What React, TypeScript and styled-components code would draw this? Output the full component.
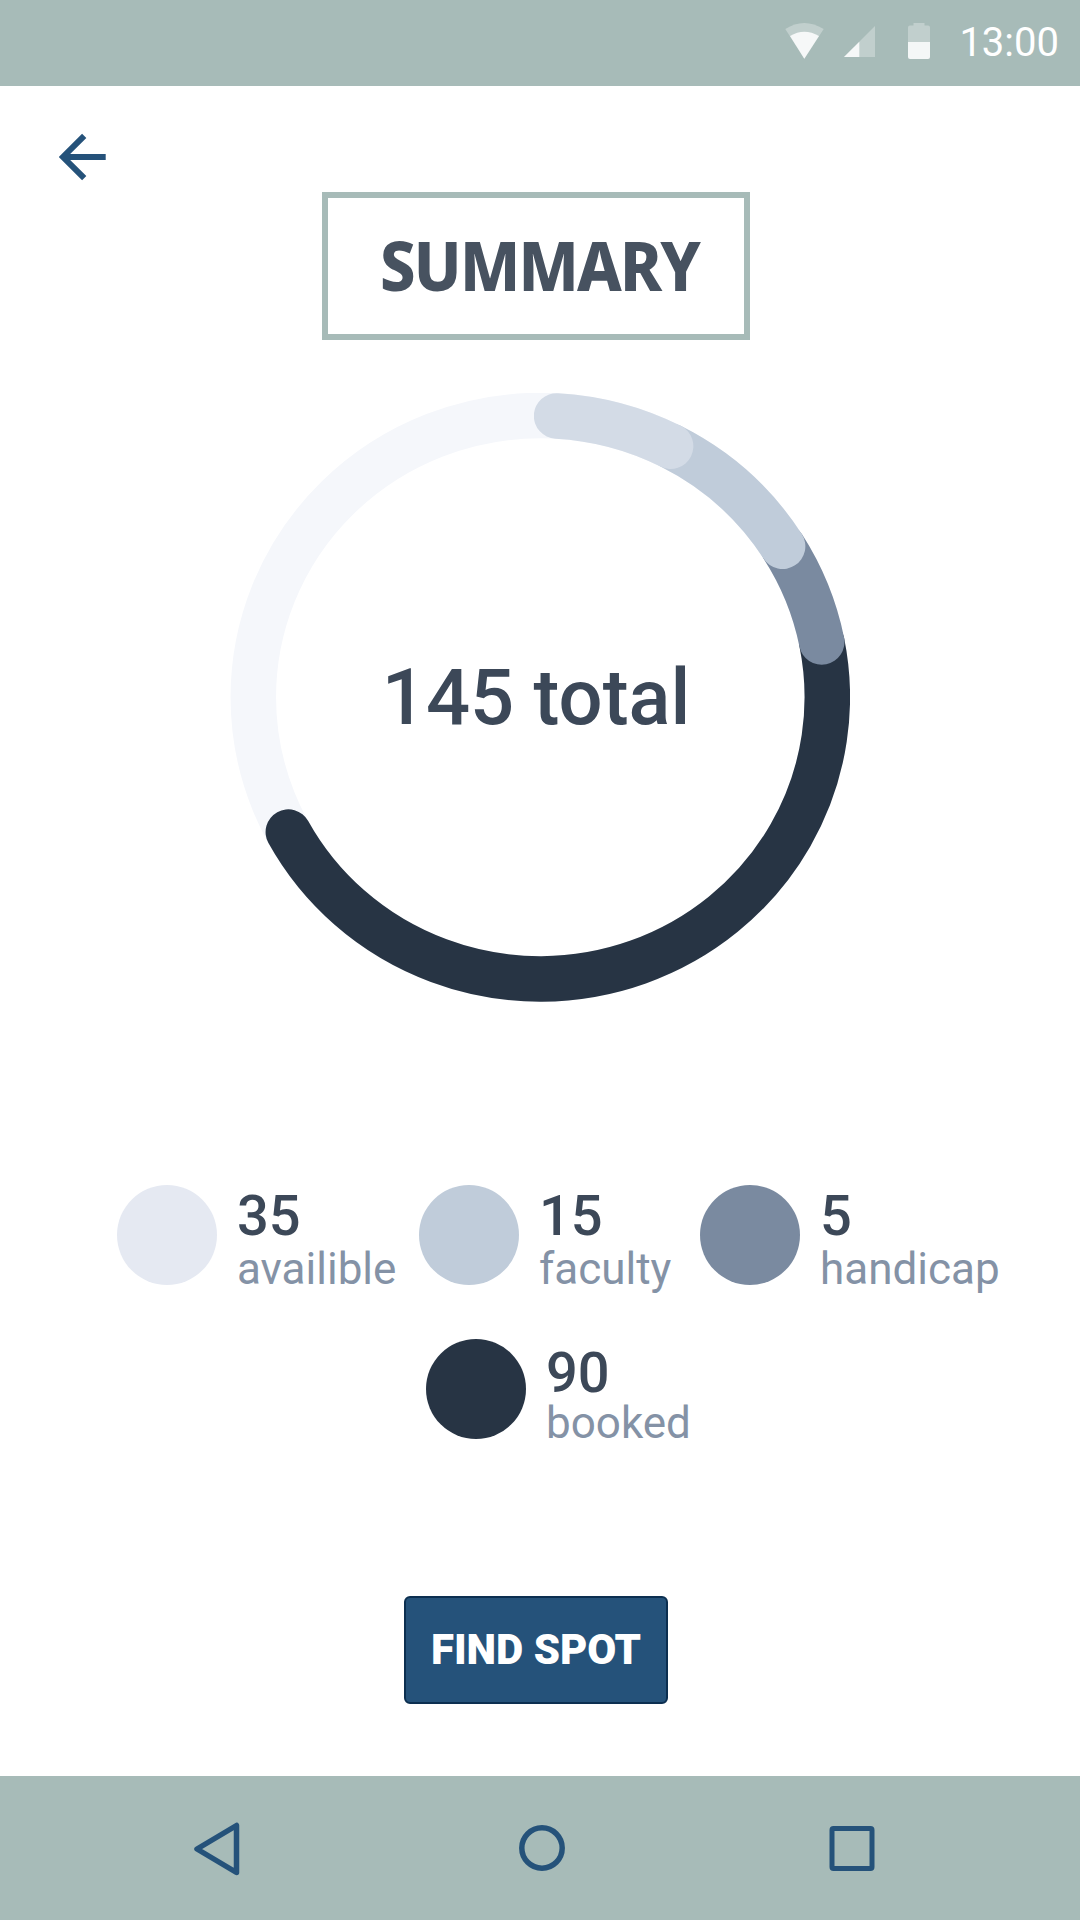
import React from 'react';
import styled, { createGlobalStyle } from 'styled-components';

const colors = {
  bar: '#a7bbb8',
  accent: '#25527a',
  ink: '#3c4858',
  label: '#8492a6',
};

const GlobalStyle = createGlobalStyle`
  * { box-sizing: border-box; }
  body { margin: 0; background: #fff; }
`;

const Screen = styled.div`
  width: 1080px;
  height: 1920px;
  display: flex;
  flex-direction: column;
  background: #fff;
  font-family: Roboto, "Liberation Sans", sans-serif;
  overflow: hidden;
`;

const StatusBar = styled.header`
  flex: none;
  height: 86px;
  display: flex;
  align-items: flex-start;
  justify-content: flex-end;
  padding: 18px 21px 0 0;
  background: ${colors.bar};
`;

const StatusIcons = styled.svg`
  width: 160px;
  height: 46px;
  margin-right: 19px;
`;

const Clock = styled.time`
  padding-top: 1px;
  font-size: 40px;
  line-height: 48px;
  color: #fff;
`;

const Main = styled.main`
  flex: 1;
  display: flex;
  flex-direction: column;
  align-items: flex-start;
`;

const BackButton = styled.button`
  flex: none;
  width: 60px;
  height: 60px;
  margin: 41px 0 0 52px;
  padding: 0;
  border: 0;
  background: none;
  svg { display: block; }
`;

const TitleBox = styled.div`
  flex: none;
  width: 428px;
  height: 148px;
  margin: 5px 0 0 322px;
  border: 6px solid ${colors.bar};
  display: flex;
  align-items: center;
  justify-content: center;
  padding: 0 0 3px 8px;
`;

const Title = styled.h1`
  margin: 0;
  font-family: "Noto Sans", "Open Sans", sans-serif;
  font-size: 68px;
  font-weight: 800;
  line-height: 90px;
  letter-spacing: -1.9px;
  color: #475260;
  white-space: nowrap;
  transform: scaleX(0.93);
`;

const ChartArea = styled.section`
  flex: none;
  width: 620px;
  height: 610px;
  margin: 53px 0 0 230px;
  display: grid;
  place-items: center;
  > * { grid-area: 1 / 1; }
`;

const Total = styled.p`
  margin: 0 0 0 -8px;
  font-size: 77.7px;
  font-weight: 500;
  line-height: 90px;
  color: ${colors.ink};
  white-space: nowrap;
`;

const Legend = styled.section`
  margin-top: 182px;
  display: flex;
  flex-direction: column;
  gap: 54px;
`;

const LegendRow = styled.div<{ $indent: number }>`
  display: flex;
  height: 100px;
  padding-left: ${(p) => p.$indent}px;
`;

const LegendItem = styled.div<{ $width: number }>`
  flex: none;
  width: ${(p) => p.$width}px;
  display: flex;
  gap: 20px;
`;

const Dot = styled.span<{ $color: string }>`
  flex: none;
  width: 100px;
  height: 100px;
  border-radius: 50%;
  background: ${(p) => p.$color};
`;

const LegendText = styled.div<{ $top: number }>`
  padding-top: ${(p) => p.$top}px;
  white-space: nowrap;
`;

const Value = styled.div<{ $height: number }>`
  height: ${(p) => p.$height}px;
  font-size: 56px;
  font-weight: 500;
  line-height: 52px;
  color: ${colors.ink};
`;

const Label = styled.div`
  font-size: 44px;
  line-height: 54px;
  color: ${colors.label};
`;

const FindButton = styled.button`
  flex: none;
  width: 264px;
  height: 108px;
  margin: 157px 0 0 404px;
  padding: 0;
  border: 2px solid #0c2f50;
  border-radius: 6px;
  background: ${colors.accent};
  color: #fff;
  font-family: inherit;
  font-size: 42px;
  font-weight: 900;
  line-height: 50px;
  white-space: nowrap;
`;

const NavBar = styled.nav`
  flex: none;
  height: 144px;
  display: flex;
  align-items: center;
  padding-left: 187px;
  gap: 258px;
  background: ${colors.bar};
  svg { display: block; flex: none; }
`;

const CX = 310.3;
const CY = 304.2;
const RX = 287;
const RY = 281.7;

/* Drawn back to front: every arc's rounded end covers the start of the one before it. */
const arcs = [
  { from: -11.3, to: 151.4, color: '#273444' },
  { from: -32.3, to: -11.3, color: '#7a8aa0' },
  { from: -63, to: -32.4, color: '#c0ccda' },
  { from: -86.75, to: -63, color: '#d3dbe6' },
];

function pointAt(degrees: number) {
  const t = (degrees * Math.PI) / 180;
  return `${(CX + RX * Math.cos(t)).toFixed(2)} ${(CY + RY * Math.sin(t)).toFixed(2)}`;
}

function Ring() {
  return (
    <svg width="620" height="610" fill="none">
      <clipPath id="startEdge">
        <path d="M304 0H620V610H0V200H304Z" />
      </clipPath>
      <ellipse cx={CX} cy={CY} rx={RX} ry={RY} stroke="#f5f7fb" strokeWidth="45.5" />
      <g clipPath="url(#startEdge)" strokeLinecap="round" strokeWidth="45.5">
        {arcs.map((a) => (
          <path key={a.color} stroke={a.color} d={`M${pointAt(a.from)}A${RX} ${RY} 0 0 1 ${pointAt(a.to)}`} />
        ))}
      </g>
    </svg>
  );
}

type Entry = { value: number; label: string; color: string; width: number };

const firstRow: Entry[] = [
  { value: 35, label: 'availible', color: '#e5e9f2', width: 302 },
  { value: 15, label: 'faculty', color: '#c0ccda', width: 281 },
  { value: 5, label: 'handicap', color: '#7a8aa0', width: 310 },
];
const secondRow: Entry[] = [{ value: 90, label: 'booked', color: '#273444', width: 280 }];

function Entries({ items, top, height }: { items: Entry[]; top: number; height: number }) {
  return (
    <>
      {items.map((e) => (
        <LegendItem key={e.label} $width={e.width}>
          <Dot $color={e.color} />
          <LegendText $top={top}>
            <Value $height={height}>{e.value}</Value>
            <Label>{e.label}</Label>
          </LegendText>
        </LegendItem>
      ))}
    </>
  );
}

export default function App() {
  return (
    <Screen>
      <GlobalStyle />
      <StatusBar>
        <StatusIcons viewBox="780 18 160 46" fill="#fff">
          <path opacity=".3" d="M785.3 29Q804 17 823.7 29L804.3 58.8Z" />
          <path opacity=".85" d="M790 36Q804.3 27.5 819 36L804.3 58.8Z" />
          <path opacity=".3" d="M875 26V57H844Z" />
          <path opacity=".85" d="M859.3 41.7V57H844Z" />
          <path opacity=".3" d="M908 42V27.5Q908 25.5 910 25.5H913.5V23H924.5V25.5H928Q930 25.5 930 27.5V42Z" />
          <path opacity=".88" d="M908 42H930V57Q930 59 928 59H910Q908 59 908 57Z" />
        </StatusIcons>
        <Clock>13:00</Clock>
      </StatusBar>
      <Main>
        <BackButton aria-label="Back">
          <svg width="60" height="60" fill="none" stroke={colors.accent} strokeWidth="6">
            <path d="M53.7 30H11M32.2 8.8L11 30L32.2 51.2" />
          </svg>
        </BackButton>
        <TitleBox>
          <Title>SUMMARY</Title>
        </TitleBox>
        <ChartArea>
          <Ring />
          <Total>145 total</Total>
        </ChartArea>
        <Legend>
          <LegendRow $indent={117}>
            <Entries items={firstRow} top={5} height={52} />
          </LegendRow>
          <LegendRow $indent={426}>
            <Entries items={secondRow} top={8} height={49} />
          </LegendRow>
        </Legend>
        <FindButton>FIND SPOT</FindButton>
      </Main>
      <NavBar>
        <svg width="60" height="60" fill="none" stroke={colors.accent} strokeWidth="5.5" strokeLinejoin="round">
          <path d="M49.5 7.5V54.5L10 31Z" />
        </svg>
        <svg width="60" height="60" fill="none" stroke={colors.accent} strokeWidth="5.5">
          <circle cx="37" cy="30" r="20.2" />
        </svg>
        <svg width="60" height="60" fill="none" stroke={colors.accent} strokeWidth="5">
          <rect x="9" y="10.5" width="40" height="40" rx="1.5" />
        </svg>
      </NavBar>
    </Screen>
  );
}
